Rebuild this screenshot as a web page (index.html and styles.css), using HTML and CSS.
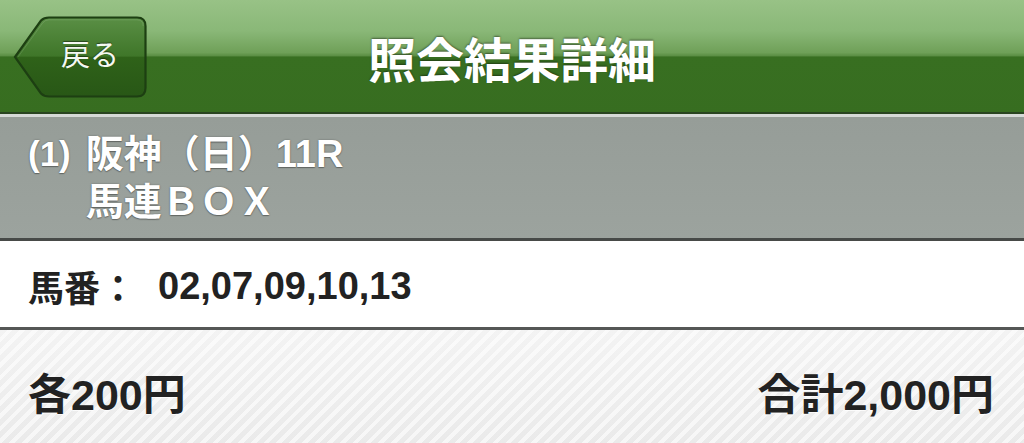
FILE: index.html
```html
<!DOCTYPE html>
<html lang="ja">
<head>
<meta charset="utf-8">
<title>照会結果詳細</title>
<link rel="stylesheet" href="styles.css">
</head>
<body>
<header class="navbar">
  <div class="nav-left">
    <a class="back-btn" href="#">
      <svg class="back-shape" width="134" height="82" viewBox="0 0 134 82" aria-hidden="true">
        <defs>
          <linearGradient id="bg" x1="0" y1="0" x2="0" y2="1">
            <stop offset="0" stop-color="#5a8f45"/>
            <stop offset="0.49" stop-color="#3f7629"/>
            <stop offset="0.5" stop-color="#2f6219"/>
            <stop offset="1" stop-color="#285716"/>
          </linearGradient>
        </defs>
        <path d="M2 41 L28 4.5 Q31 1.5 36 1.5 L124 1.5 Q132.5 1.5 132.5 10 L132.5 72 Q132.5 80.5 124 80.5 L36 80.5 Q31 80.5 28 77.5 Z" fill="url(#bg)" stroke="#1d3f12" stroke-width="2.2"/>
        <path d="M5 41 L30 6.5 Q32.5 3.8 36 3.8 L124 3.8 Q130.2 3.8 130.2 10" fill="none" stroke="rgba(255,255,255,0.12)" stroke-width="1"/>
      </svg>
      <span class="back-label">戻る</span>
    </a>
  </div>
  <h1 class="nav-title">照会結果詳細</h1>
  <div class="nav-right"></div>
</header>

<section class="race">
  <span class="race-no">(1)</span>
  <div class="race-lines">
    <div class="race-line">阪神（日）11R</div>
    <div class="race-line">馬連ＢＯＸ</div>
  </div>
</section>

<section class="horses">
  <span class="horses-label">馬番：</span>
  <span class="horses-nums">02,07,09,10,13</span>
</section>

<section class="amounts">
  <span class="amount">各200円</span>
  <span class="amount">合計2,000円</span>
</section>
</body>
</html>
```

FILE: styles.css
```css
* { box-sizing: border-box; }

html, body {
  margin: 0;
  padding: 0;
  width: 1024px;
  height: 443px;
  overflow: hidden;
  background: #f2f2f2;
  font-family: "Liberation Sans", "Noto Sans CJK JP", sans-serif;
}

.navbar {
  display: grid;
  grid-template-columns: 1fr auto 1fr;
  align-items: center;
  height: 117px;
  padding-bottom: 5px;
  background:
    linear-gradient(to bottom, #2a4521 0, #2a4521 2px, #d6dad7 2px, #d6dad7 5px) bottom / 100% 5px no-repeat,
    linear-gradient(to bottom, #98c286 0%, #8ab878 26%, #6fa058 45%, #5f9248 47%, #5a8d44 48%, #386f21 48.5%, #376d20 100%);
}

.nav-left {
  display: flex;
  align-items: center;
  padding-left: 13px;
  padding-top: 1px;
}

.back-btn {
  position: relative;
  display: flex;
  align-items: center;
  justify-content: center;
  width: 134px;
  height: 82px;
  text-decoration: none;
}

.back-shape {
  position: absolute;
  left: 0;
  top: 0;
}

.back-label {
  position: relative;
  margin-left: 20px;
  margin-top: -8px;
  color: #f4f8f2;
  font-family: "Noto Sans CJK JP", sans-serif;
  font-size: 29px;
  font-weight: 400;
  text-shadow: 0 -1px 1px rgba(0, 0, 0, 0.45);
}

.nav-title {
  margin: 0;
  padding-top: 2px;
  color: #ffffff;
  font-family: "Noto Sans CJK JP", sans-serif;
  font-size: 48px;
  font-weight: 700;
  text-shadow: 0 -1px 2px rgba(0, 0, 0, 0.45);
}

.race {
  display: flex;
  align-items: flex-start;
  gap: 15px;
  height: 124px;
  padding: 13px 0 0 28px;
  background: linear-gradient(to bottom, #969d98, #9ca39e);
  border-bottom: 3px solid #474a48;
  color: #ffffff;
  font-size: 38px;
  font-weight: 700;
  line-height: 48px;
  text-shadow: 0 0 2px rgba(0, 0, 0, 0.35), 0 1px 1px rgba(0, 0, 0, 0.3);
}

.race-no {
  font-size: 35px;
}

.race-line {
  height: 48px;
}

.horses {
  display: flex;
  align-items: center;
  height: 89px;
  padding: 4px 0 0 28px;
  background: #ffffff;
  border-bottom: 3px solid #555756;
  color: #222222;
  font-weight: 700;
}

.horses-label {
  font-size: 36px;
  margin-right: 22px;
}

.horses-nums {
  font-size: 38px;
}

.amounts {
  display: flex;
  align-items: center;
  justify-content: space-between;
  height: 113px;
  padding: 8px 30px 0 28px;
  color: #222222;
  font-size: 43px;
  font-weight: 700;
  text-shadow: 0 1px 0 rgba(255, 255, 255, 0.8);
  background:
    repeating-linear-gradient(135deg, rgba(255, 255, 255, 0) 0, rgba(255, 255, 255, 0) 5px, rgba(255, 255, 255, 0.6) 5px, rgba(255, 255, 255, 0.6) 9px),
    linear-gradient(to bottom, #f3f3f3, #eaeaea);
}
```
